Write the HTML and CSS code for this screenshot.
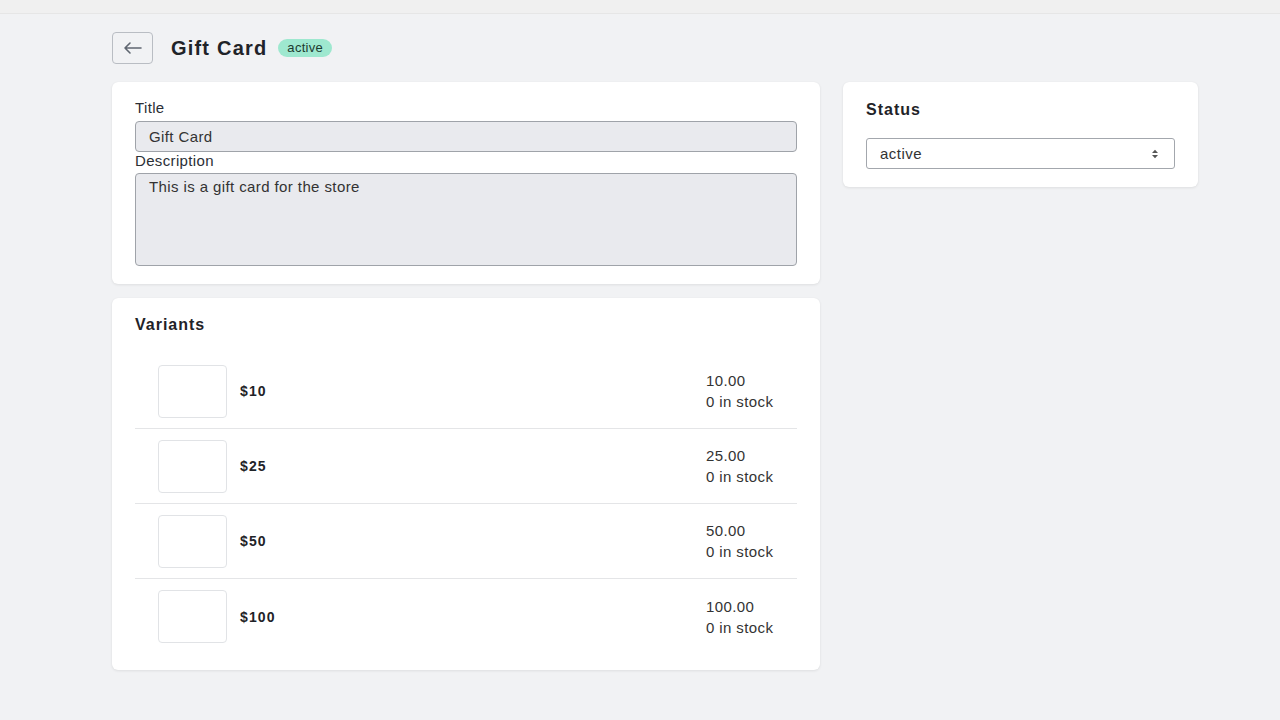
FILE: index.html
```html
<!DOCTYPE html>
<html>
<head>
<meta charset="utf-8">
<link rel="stylesheet" href="styles.css">
</head>
<body>
<div class="topbar"></div>
<main class="page">
  <header class="head">
    <button class="back" aria-label="Back">
      <svg width="22" height="20" viewBox="0 0 22 20" fill="none" stroke="#5f6670" stroke-width="1.6" stroke-linecap="round" stroke-linejoin="round"><path d="M19 10H3M8 5l-5 5 5 5"/></svg>
    </button>
    <h1 class="title">Gift Card</h1>
    <span class="badge">active</span>
  </header>
  <div class="grid">
    <div class="col-main">
      <section class="card form">
        <label class="label">Title</label>
        <div class="input">Gift Card</div>
        <label class="label">Description</label>
        <div class="input textarea">This is a gift card for the store</div>
      </section>
      <section class="card variants-card">
        <h2 class="card-title">Variants</h2>
        <ul class="variants">
          <li class="variant"><div class="thumb"></div><span class="vname">$10</span><div class="vinfo"><div>10.00</div><div>0 in stock</div></div></li>
          <li class="variant"><div class="thumb"></div><span class="vname">$25</span><div class="vinfo"><div>25.00</div><div>0 in stock</div></div></li>
          <li class="variant"><div class="thumb"></div><span class="vname">$50</span><div class="vinfo"><div>50.00</div><div>0 in stock</div></div></li>
          <li class="variant"><div class="thumb"></div><span class="vname">$100</span><div class="vinfo"><div>100.00</div><div>0 in stock</div></div></li>
        </ul>
      </section>
    </div>
    <aside class="col-side">
      <section class="card status">
        <h2 class="card-title">Status</h2>
        <div class="select">
          <span>active</span>
          <svg width="8" height="12" viewBox="0 0 8 12"><path d="M4 1.8L7 5H1z M4 10.2L1 7h6z" fill="#555"/></svg>
        </div>
      </section>
    </aside>
  </div>
</main>
</body>
</html>
```
FILE: styles.css
```css
* { box-sizing: border-box; }
html, body { margin: 0; padding: 0; }
body {
  background: #f1f2f4;
  font-family: "Liberation Sans", Arial, sans-serif;
  color: #2b2f36;
  width: 1280px;
  height: 720px;
  overflow: hidden;
}
.topbar {
  height: 14px;
  background: #f0f0f0;
  border-bottom: 1px solid #e6e6e6;
}
.page {
  width: 1086px;
  margin: 0 0 0 112px;
}
.head {
  display: flex;
  align-items: center;
  height: 32px;
  margin-top: 18px;
  margin-bottom: 18px;
}
.back {
  width: 41px;
  height: 32px;
  border: 1px solid #b9bdc3;
  border-radius: 4px;
  background: #f1f2f4;
  display: flex;
  align-items: center;
  justify-content: center;
  padding: 0;
  margin-right: 18px;
}
.title {
  font-size: 20px;
  font-weight: bold;
  letter-spacing: 1.2px;
  margin: 0 11px 0 0;
  color: #1f2328;
}
.badge {
  background: #9ee8cf;
  color: #1d3b30;
  font-size: 13px;
  letter-spacing: 0.3px;
  line-height: 18px;
  height: 18px;
  padding: 0 9px;
  border-radius: 9px;
}
.grid {
  display: flex;
  gap: 23px;
  align-items: flex-start;
}
.col-main {
  width: 708px;
  display: flex;
  flex-direction: column;
  gap: 14px;
}
.col-side { width: 355px; }
.card {
  background: #fff;
  border-radius: 6px;
  box-shadow: 0 1px 3px rgba(0,0,0,0.08), 0 0 1px rgba(0,0,0,0.06);
  padding: 23px;
}
.form {
  padding-top: 17px;
  padding-bottom: 18px;
  display: flex;
  flex-direction: column;
}
.label {
  font-size: 15px;
  letter-spacing: 0.35px;
  line-height: 18px;
  color: #2b2f36;
  margin-bottom: 4px;
}
.input + .label { margin-bottom: 3px; }
.input {
  height: 31px;
  background: #e9eaee;
  border: 1px solid #9fa3a9;
  border-radius: 4px;
  padding: 0 13px;
  font-size: 15px;
  letter-spacing: 0.4px;
  line-height: 29px;
  color: #333;
}
.textarea {
  height: 93px;
  line-height: 20px;
  padding-top: 3px;
}
.card-title {
  font-size: 16px;
  font-weight: bold;
  letter-spacing: 1px;
  margin: 0;
  line-height: 20px;
  color: #1f2328;
}
.variants-card {
  padding-top: 17px;
  padding-bottom: 16px;
}
.variants {
  list-style: none;
  margin: 19px 0 0;
  padding: 0;
}
.variant {
  display: flex;
  align-items: center;
  height: 75px;
  padding: 0 23px;
  border-bottom: 1px solid #e4e5e7;
}
.variant:last-child { border-bottom: none; }
.thumb {
  width: 69px;
  height: 53px;
  border: 1px solid #e1e3e6;
  border-radius: 4px;
  margin-right: 13px;
}
.vname {
  font-size: 14px;
  font-weight: bold;
  letter-spacing: 1.1px;
  flex: 1;
  color: #1f2328;
}
.vinfo {
  font-size: 15px;
  letter-spacing: 0.4px;
  line-height: 21px;
  color: #333;
  width: 68px;
  white-space: nowrap;
}
.status {
  padding-top: 18px;
  padding-bottom: 18px;
}
.status .card-title { margin-bottom: 18px; }
.select {
  height: 31px;
  border: 1px solid #a3a7ad;
  border-radius: 3px;
  display: flex;
  align-items: center;
  justify-content: space-between;
  padding: 0 15px 0 13px;
  font-size: 15px;
  letter-spacing: 0.5px;
  color: #333;
}
```
